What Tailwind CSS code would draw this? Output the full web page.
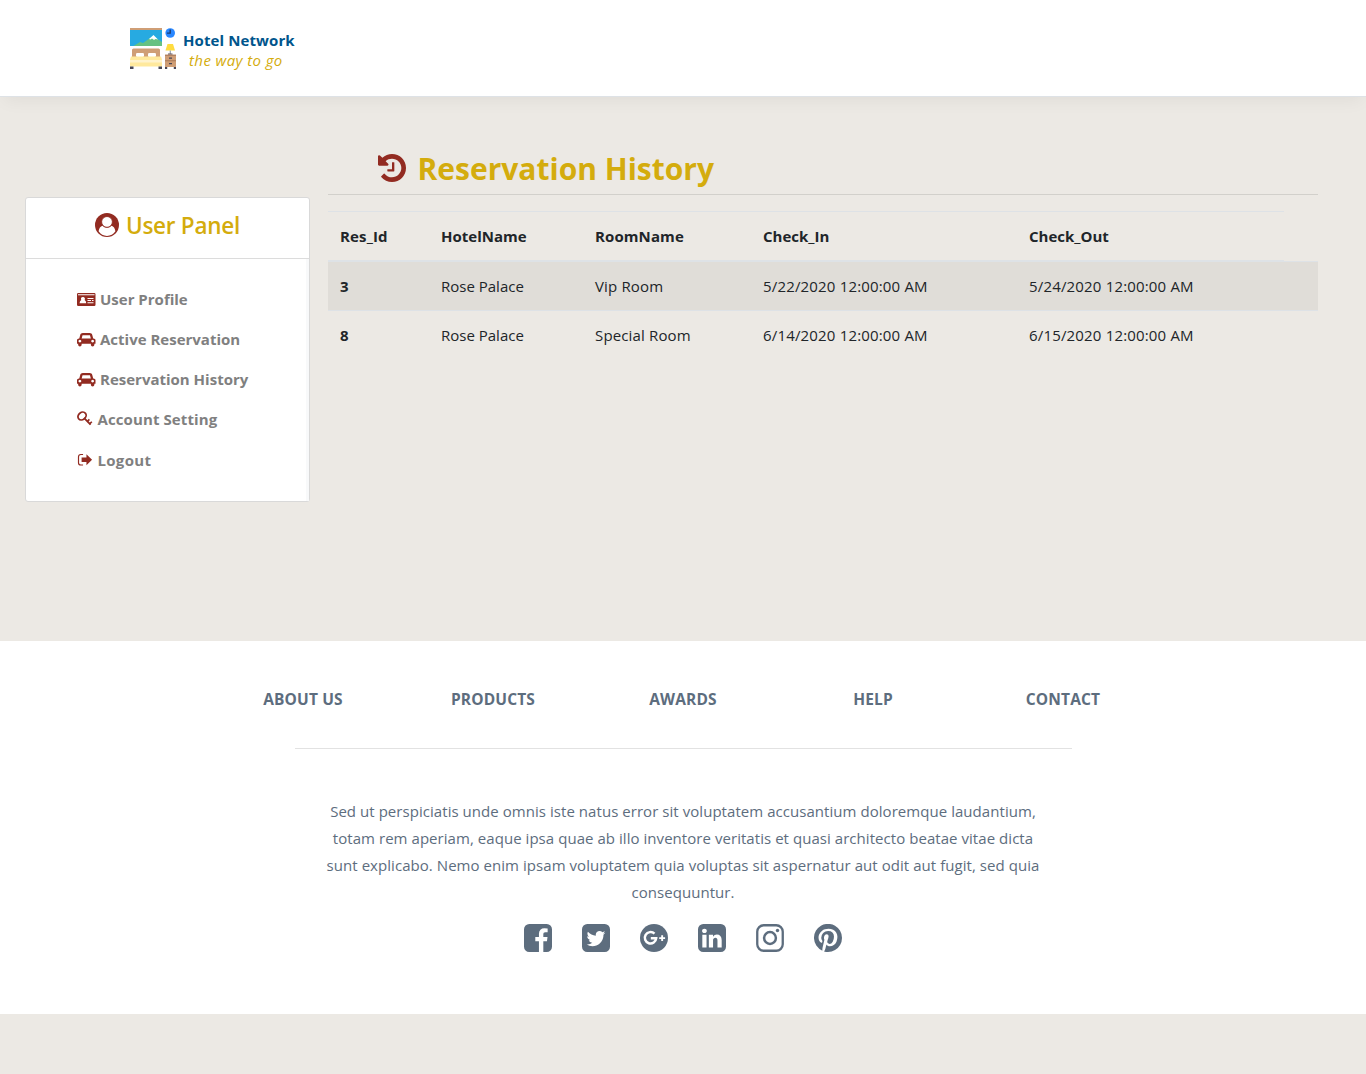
<!DOCTYPE html>
<html lang="en">
<head>
<meta charset="utf-8">
<title>Reservation History</title>
<script src="https://cdn.jsdelivr.net/npm/@tailwindcss/browser@4"></script>
</head>
<body class="min-h-screen bg-[#ece9e4] font-['Open_Sans','Noto_Sans',sans-serif] text-[15px] text-[#212529]">

<header class="box-content flex h-24 border-b border-[#dee2e6] bg-white pl-[130px] shadow-[0_8px_16px_-4px_rgba(0,0,0,0.05)]">
  <svg class="mt-7 h-[42px] w-[47px] shrink-0" viewBox="0 0 47 42">
    <path fill="#27aae1" d="M0 0h32v18H0z"/>
    <path fill="#cf9e76" d="M0 0h32v2H0z"/>
    <path fill="#66c182" d="M3.500 18l6.500-4 3 1 10-7 9 6v4z"/>
    <path fill="#fff" d="M19 11l4.500-4 4.500 4.500-2.500-.6-1.500 1.200-2-1.500-1.500 1z"/>
    <path fill="#cf9e76" d="M2 22q0-1.500 1.500-1.500h25q1.500 0 1.500 1.500v7H2z"/>
    <rect x="6" y="25" width="8" height="4" rx="1.300" fill="#fff"/>
    <rect x="18" y="25" width="8" height="4" rx="1.300" fill="#fff"/>
    <path fill="#ffe99d" d="M1 28.500h30l1 3v7H0v-7z"/>
    <path fill="#fff3cd" d="M0 32h32v2.500H0z"/>
    <path fill="#464655" d="M0 38.500h3.500V41H0zM28.500 38.500H32V41h-3.500z"/>
    <circle cx="40.200" cy="5" r="4.800" fill="#2987ff"/>
    <path fill="#1d3f73" d="M39.500 1.500h1.400v4.300h-4V4.500h2.600z"/>
    <path fill="#ffdc40" d="M37.500 16h5.500l2 6.500h-9.500z"/>
    <path fill="#9aa0aa" d="M39.700 22.500h1.200V26h-1.200z"/>
    <path fill="#5c5560" d="M38 25.500h4.500v1.200H38z"/>
    <path fill="#cf9e76" d="M35 26.700h11V39H35z"/>
    <path fill="#a97a5a" d="M35 26.700h11v1H35zM35 32.300h11v1H35z"/>
    <path fill="#464655" d="M39 29.500h3v1.200h-3zM39 35h3v1.200h-3zM35 39h2.200v2H35zM43.800 39H46v2h-2.200z"/>
  </svg>
  <div class="ml-1.5 pt-[30px] leading-5">
    <div class="font-bold tracking-[0.1px] text-[#00558c]">Hotel Network</div>
    <div class="pl-1.5 tracking-[0.4px] text-[#d4ac0d] italic">the way to go</div>
  </div>
</header>

<main class="flex h-[544px] items-start">
  <aside class="mt-[100px] ml-[25px] h-[305px] w-[285px] shrink-0 rounded-[3px] border border-[#d9d9d9] bg-white">
    <h2 class="flex h-[61px] items-start justify-center border-b border-[#dcdcdc] pt-[15px] text-[22.5px] leading-[25px] font-semibold text-[#d4ac0d]">
      <svg class="mr-[7px] size-6" viewBox="0 0 24 24">
        <circle cx="12" cy="12" r="12" fill="#922b21"/>
        <path fill="#fff" d="M3.600 18.200C4 15.200 5.500 13.300 7.400 12.700c1.200 1.300 2.800 2 4.600 2s3.400-.7 4.600-2c1.900.6 3.400 2.500 3.800 5.500-1.900 2.900-5 4.700-8.400 4.700s-6.500-1.800-8.400-4.700z"/>
        <circle cx="12" cy="8.900" r="5.400" fill="#fff" stroke="#922b21" stroke-width=".9"/>
      </svg>
      <span class="tracking-[-0.25px]">User Panel</span>
    </h2>
    <nav class="h-[242px] border-r-3 border-[#f8f9fa] pt-5 pl-[51px] font-bold text-[#808080]">
      <a class="flex h-10 items-center">
        <svg class="mr-[4.500px] h-[15px] w-[18.500px]" viewBox="0 0 18.500 15"><path fill="#922b21" fill-rule="evenodd" d="M1.300 1h16q1.200 0 1.200 1.200v10.600q0 1.200-1.200 1.200h-16Q0 14 0 12.800V2.200Q0 1 1.300 1zM1 2.200v1h16.500v-1zM6 4.900a1.900 1.900 0 0 0-1.700 3Q2.600 8.700 2.600 11.200h6.600Q9.200 8.700 7.600 7.900A1.900 1.900 0 0 0 6 4.900zM10.500 6v1.100h6V6zM10.500 8v1.100h3.500V8zM15 8v1.100h1.500V8zM10.500 10.200v1h6v-1z"/></svg>User Profile</a>
      <a class="flex h-10 items-center">
        <svg class="mr-[4.500px] h-[15px] w-[18.500px]" viewBox="0 0 2048 1792" preserveAspectRatio="none"><path fill="#922b21" d="M480 1088q0-66-47-113t-113-47-113 47-47 113 47 113 113 47 113-47 47-113zm36-320h1016l-89-357q-2-8-14-17.500t-21-9.500H640q-9 0-21 9.500T605 411zm1372 320q0-66-47-113t-113-47-113 47-47 113 47 113 113 47 113-47 47-113zm160-96v384q0 14-9 23t-23 9h-96v128q0 80-56 136t-136 56-136-56-56-136v-128H512v128q0 80-56 136t-136 56-136-56-56-136v-128H32q-14 0-23-9t-9-23V992q0-93 65.500-158.500T224 768h28l105-419q23-94 104-157.500T640 128h768q98 0 179 63.500T1691 349l105 419h28q93 0 158.500 65.500T2048 992z"/></svg>Active Reservation</a>
      <a class="flex h-10 items-center">
        <svg class="mr-[4.500px] h-[15px] w-[18.500px]" viewBox="0 0 2048 1792" preserveAspectRatio="none"><path fill="#922b21" d="M480 1088q0-66-47-113t-113-47-113 47-47 113 47 113 113 47 113-47 47-113zm36-320h1016l-89-357q-2-8-14-17.500t-21-9.500H640q-9 0-21 9.500T605 411zm1372 320q0-66-47-113t-113-47-113 47-47 113 47 113 113 47 113-47 47-113zm160-96v384q0 14-9 23t-23 9h-96v128q0 80-56 136t-136 56-136-56-56-136v-128H512v128q0 80-56 136t-136 56-136-56-56-136v-128H32q-14 0-23-9t-9-23V992q0-93 65.500-158.500T224 768h28l105-419q23-94 104-157.500T640 128h768q98 0 179 63.500T1691 349l105 419h28q93 0 158.500 65.500T2048 992z"/></svg>Reservation History</a>
      <a class="flex h-10 items-center tracking-[0.1px]">
        <svg class="mr-[5px] size-[15.500px]" viewBox="0 0 16 16" fill="none" stroke="#922b21"><ellipse cx="5.200" cy="5.200" rx="4.500" ry="3.700" transform="rotate(-38 5.200 5.200)" stroke-width="1.800"/><path stroke-width="1.900" d="M7.200 7.200l6.800 6.900"/><path stroke-width="1.700" d="M10.500 11l2.300-2.300M13 13.300l2.300-2.200"/></svg>Account Setting</a>
      <a class="flex h-[41px] items-center pt-px tracking-[0.3px]">
        <svg class="mr-[5px] size-[15.500px]" viewBox="0 0 15.500 16"><path fill="none" stroke="#922b21" stroke-width="1.200" d="M6 2.600H3.700Q1.300 2.600 1.300 5v6q0 2.400 2.400 2.400H6"/><path fill="#922b21" d="M4.500 5.600h5V2.300L15.300 8l-5.800 5.700v-3.300h-5z"/></svg>Logout</a>
    </nav>
  </aside>

  <section class="ml-[18px] w-[990px] pt-[52px]">
    <h1 class="flex h-[46px] border-b border-[#d2d0cb] pl-[50px] text-[30px] leading-10 font-bold text-[#d4ac0d]">
      <svg class="mt-[5px] mr-[11.500px] size-7" viewBox="128 128 1536 1536"><path fill="#922b21" d="M1664 896q0 156-61 298t-164 245-245 164-298 61q-172 0-327-72.500t-264-204.500q-7-10-6.500-22.500t8.500-20.500l137-138q10-9 25-9 16 2 23 12 73 95 179 147t225 52q104 0 198.500-40.500t163.500-109.500 109.500-163.500 40.500-198.500-40.500-198.500-109.500-163.500-163.500-109.500-198.500-40.500q-98 0-188 35.500t-160 101.500l137 138q31 30 14 69-17 40-59 40h-448q-26 0-45-19t-19-45v-448q0-42 40-59 39-17 69 14l130 129q107-101 244.500-156.500t284.500-55.500q156 0 298 61t245 164 164 245 61 298zm-640-288v448q0 14-9 23t-23 9h-320q-14 0-23-9t-9-23v-64q0-14 9-23t23-9h224v-352q0-14 9-23t23-9h64q14 0 23 9t9 23z"/></svg>
      <span>Reservation History</span>
    </h1>
    <table class="mt-4 w-full table-fixed border-separate border-spacing-0 text-left">
      <colgroup><col class="w-[101px]"><col class="w-[154px]"><col class="w-[168px]"><col class="w-[266px]"><col class="w-[267px]"><col class="w-[34px]"></colgroup>
      <thead>
        <tr class="h-[50px] font-bold [&>th]:border-t [&>th]:border-b [&>th]:border-[#dee2e6] [&>th]:px-3 [&>th]:pt-px">
          <th class="tracking-[0.15px]">Res_Id</th><th>HotelName</th><th class="tracking-[0.1px]">RoomName</th><th>Check_In</th><th>Check_Out</th><td></td>
        </tr>
      </thead>
      <tbody class="[&_td]:border-t [&_td]:border-[#dee2e6] [&_td]:px-3">
        <tr class="h-[49px] bg-[#e0ddd8]">
          <td class="font-bold">3</td><td>Rose Palace</td><td class="tracking-[0.15px]">Vip Room</td><td class="tracking-[0.17px]">5/22/2020 12:00:00 AM</td><td class="tracking-[0.17px]">5/24/2020 12:00:00 AM</td><td></td>
        </tr>
        <tr class="h-[50px]">
          <td class="font-bold">8</td><td>Rose Palace</td><td class="tracking-[0.15px]">Special Room</td><td class="tracking-[0.17px]">6/14/2020 12:00:00 AM</td><td class="tracking-[0.17px]">6/15/2020 12:00:00 AM</td><td></td>
        </tr>
      </tbody>
    </table>
  </section>
</main>

<footer class="flex h-[373px] flex-col items-center bg-white text-[#5d6d7e]">
  <nav class="mt-[46px] grid w-[950px] grid-cols-5 text-center text-[15.500px] leading-6 font-bold tracking-[0.15px]">
    <a>ABOUT US</a><a>PRODUCTS</a><a>AWARDS</a><a>HELP</a><a>CONTACT</a>
  </nav>
  <hr class="mt-[37px] w-[777px] border-[#e2e2e2]">
  <p class="mt-[49px] text-center leading-[27px] tracking-[0.05px]">Sed ut perspiciatis unde omnis iste natus error sit voluptatem accusantium doloremque laudantium,<br>totam rem aperiam, eaque ipsa quae ab illo inventore veritatis et quasi architecto beatae vitae dicta<br>sunt explicabo. Nemo enim ipsam voluptatem quia voluptas sit aspernatur aut odit aut fugit, sed quia<br>consequuntur.</p>
  <div class="mt-[17.500px] flex gap-[30px] fill-[#5d6d7e] [&>svg]:size-7">
    <svg viewBox="128 128 1536 1536"><path d="M1376 128q119 0 203.500 84.500t84.500 203.500v960q0 119-84.500 203.500t-203.500 84.500h-188v-595h199l30-232h-229v-148q0-56 23.500-84t91.500-28l122-1v-207q-63-9-178-9-136 0-217.500 80t-81.500 226v171h-200v232h200v595h-532q-119 0-203.500-84.500t-84.500-203.500v-960q0-119 84.500-203.500t203.500-84.500h960z"/></svg>
    <svg viewBox="128 128 1536 1536"><path d="M1408 610q-56 25-121 34 68-40 93-117-65 38-134 51-61-66-153-66-87 0-148.500 61.500t-61.500 148.500q0 29 5 48-129-7-242-65t-192-155q-29 50-29 106 0 114 91 175-47-1-100-26v2q0 75 50 133.500t123 72.500q-29 8-51 8-13 0-39-4 21 63 74.500 104t121.500 42q-116 90-261 90-26 0-50-3 148 94 322 94 112 0 210-35.500t168-95 120.500-137 75-162 24.500-168.500q0-18-1-27 63-45 105-109zm256-194v960q0 119-84.500 203.500t-203.500 84.500h-960q-119 0-203.500-84.500t-84.500-203.500v-960q0-119 84.500-203.500t203.500-84.500h960q119 0 203.500 84.500t84.500 203.500z"/></svg>
    <svg viewBox="0 0 28 28"><circle cx="14" cy="14" r="14"/><path fill="none" stroke="#fff" stroke-width="2.500" d="M14.500 9.700A5.700 5.700 0 1 0 16.200 14.200H10.800"/><path fill="#fff" d="M21.200 11.200h1.900v2h2v1.900h-2v2h-1.900v-2h-2v-1.900h2z"/></svg>
    <svg viewBox="128 128 1536 1536"><path d="M365 1414h231v-694h-231v694zm246-908q-1-52-36-86t-93-34-94.500 34-36.500 86q0 51 35.500 85.500t92.500 34.500h1q59 0 95-34.500t36-85.500zm585 908h231v-398q0-154-73-233t-193-79q-136 0-209 117h2v-101h-231q3 66 0 694h231v-388q0-38 7-56 15-35 45-59.500t74-24.500q116 0 116 157v371zm468-998v960q0 119-84.500 203.500t-203.500 84.500h-960q-119 0-203.500-84.500t-84.500-203.500v-960q0-119 84.500-203.500t203.500-84.500h960q119 0 203.500 84.500t84.500 203.500z"/></svg>
    <svg viewBox="0 0 28 28"><rect x="1.250" y="1.250" width="25.500" height="25.500" rx="6.500" fill="none" stroke="#5d6d7e" stroke-width="2.300"/><circle cx="14" cy="14" r="5.900" fill="none" stroke="#5d6d7e" stroke-width="2.500"/><circle cx="21.500" cy="6.500" r="1.700"/></svg>
    <svg viewBox="128 128 1536 1536"><path d="M1664 896q0 209-103 385.500t-279.500 279.500-385.500 103q-111 0-218-32 59-93 78-164 9-34 54-211 20 39 73 67.500t114 28.500q121 0 216-68.500t147-188.500 52-270q0-114-59.500-214t-172.500-163-255-63q-105 0-196 29t-154.500 77-109 110.500-67 129.500-21.500 134q0 104 40 183t117 111q30 12 38-20 2-7 8-31t8-30q6-23-11-43-51-61-51-151 0-151 104.500-259.500t273.500-108.500q151 0 235.500 82t84.500 213q0 170-68.500 289t-175.500 119q-61 0-98-43.500t-23-104.500q8-35 26.500-93.500t30-103 11.500-75.500q0-50-27-83t-77-33q-62 0-105 57t-43 139q0 70 24 118l-99 418q-17 70-13 177-206-91-333-281t-127-423q0-209 103-385.500t279.500-279.500 385.500-103 385.500 103 279.500 279.500 103 385.500z"/></svg>
  </div>
</footer>
</body>
</html>
